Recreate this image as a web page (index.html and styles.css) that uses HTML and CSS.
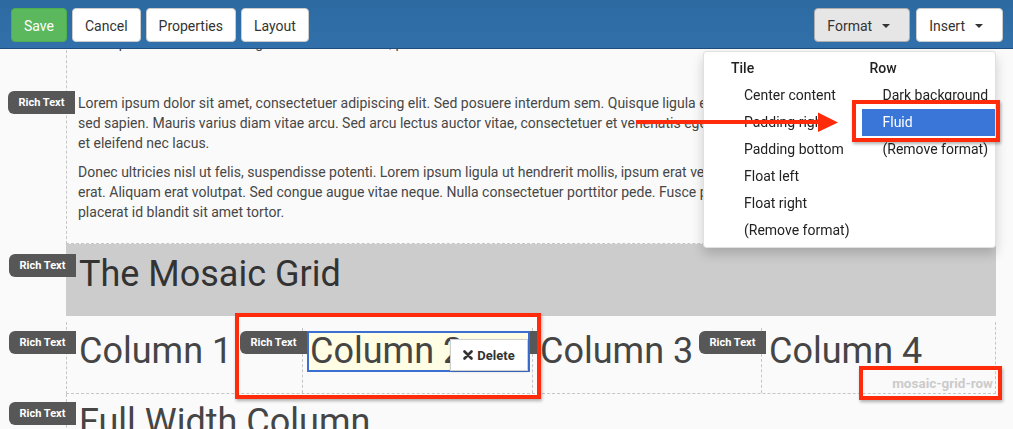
FILE: index.html
```html
<!DOCTYPE html>
<html lang="en">
<head>
<meta charset="utf-8">
<title>Mosaic Layout Editor</title>
<link rel="stylesheet" href="styles.css">
</head>
<body>
<header class="toolbar">
  <div class="tb-group">
    <button class="btn btn-save">Save</button>
    <button class="btn">Cancel</button>
    <button class="btn">Properties</button>
    <button class="btn">Layout</button>
  </div>
  <div class="tb-group">
    <button class="btn btn-active">Format<span class="caret"></span></button>
    <button class="btn">Insert<span class="caret"></span></button>
  </div>
</header>

<div class="dropdown">
  <div class="dd-col dd-col-tile">
    <div class="dd-head">Tile</div>
    <div class="dd-item">Center content</div>
    <div class="dd-item">Padding right</div>
    <div class="dd-item">Padding bottom</div>
    <div class="dd-item">Float left</div>
    <div class="dd-item">Float right</div>
    <div class="dd-item">(Remove format)</div>
  </div>
  <div class="dd-col dd-col-row">
    <div class="dd-head">Row</div>
    <div class="dd-item">Dark background</div>
    <div class="dd-item active">Fluid</div>
    <div class="dd-item">(Remove format)</div>
  </div>
</div>

<main class="canvas">
  <section class="row row-text">
    <div class="tile tile-partial">
      <p>Fusce purus morbi tortor magna condimentum vel, placerat id blandit sit amet tortor. Mauris sed libero.</p>
    </div>
    <div class="tile tile-body">
      <span class="label">Rich Text</span>
      <p>Lorem ipsum dolor sit amet, consectetuer adipiscing elit. Sed posuere interdum sem. Quisque ligula eros ullamcorper quis, lacinia quis facilisis<br>sed sapien. Mauris varius diam vitae arcu. Sed arcu lectus auctor vitae, consectetuer et venenatis eget velit. Sed augue orci, lacinia eu tincidunt<br>et eleifend nec lacus.</p>
      <p>Donec ultricies nisl ut felis, suspendisse potenti. Lorem ipsum ligula ut hendrerit mollis, ipsum erat vehicula risus, eu suscipit sem libero nec<br>erat. Aliquam erat volutpat. Sed congue augue vitae neque. Nulla consectetuer porttitor pede. Fusce purus morbi tortor magna condimentum vel,<br>placerat id blandit sit amet tortor.</p>
    </div>
  </section>

  <section class="row row-dark">
    <div class="tile">
      <span class="label">Rich Text</span>
      <h1 class="big">The Mosaic Grid</h1>
    </div>
  </section>

  <section class="row row-grid">
    <div class="cell">
      <div class="tile">
        <span class="label">Rich Text</span>
        <h2 class="big">Column 1</h2>
      </div>
    </div>
    <div class="cell">
      <div class="tile tile-selected">
        <span class="label">Rich Text</span>
        <h2 class="big">Column 2</h2>
        <button class="delete"><svg class="x-icon" viewBox="0 0 10 10" width="10" height="10"><path d="M1.5 1.5 L8.5 8.5 M8.5 1.5 L1.5 8.5" stroke="#333" stroke-width="2.6" stroke-linecap="round"/></svg>Delete</button>
      </div>
    </div>
    <div class="cell">
      <div class="tile">
        <span class="label">Rich Text</span>
        <h2 class="big">Column 3</h2>
      </div>
    </div>
    <div class="cell">
      <div class="tile">
        <span class="label">Rich Text</span>
        <h2 class="big">Column 4</h2>
      </div>
    </div>
    <span class="row-name">mosaic-grid-row</span>
  </section>

  <section class="row row-full">
    <div class="tile">
      <span class="label">Rich Text</span>
      <h2 class="big">Full Width Column</h2>
    </div>
  </section>
</main>

<div class="anno anno-fluid"></div>
<div class="anno anno-col"></div>
<div class="anno anno-rowname"></div>
<svg class="arrow" width="215" height="30" viewBox="0 0 215 30">
  <line x1="6" y1="14" x2="192" y2="14" stroke="#ff2b0a" stroke-width="4"/>
  <polygon points="188,4.5 208,14.5 188,24" fill="#ff2b0a"/>
</svg>
</body>
</html>
```

FILE: styles.css
```css
* { box-sizing: border-box; }
html, body { margin: 0; height: 100%; }
body {
  background: #fafafa;
  font-family: Roboto, "Liberation Sans", sans-serif;
  font-size: 14px;
  color: #474747;
  overflow: hidden;
  position: relative;
}

/* Toolbar */
.toolbar {
  position: fixed;
  top: 0; left: 0; right: 0;
  height: 49px;
  background: linear-gradient(#2d6aa2, #3170aa);
  border-bottom: 1px solid #1f4e7c;
  display: flex;
  justify-content: space-between;
  align-items: flex-start;
  padding: 8px 10px 0 11px;
  z-index: 10;
}
.tb-group { display: flex; gap: 5px; }
.tb-group + .tb-group { gap: 6px; }
.btn {
  font-family: inherit;
  font-size: 14px;
  line-height: 20px;
  height: 34px;
  padding: 7px 12px 5px;
  border: 1px solid #ccc;
  border-radius: 4px;
  background: #fff;
  color: #333;
  display: inline-flex;
  align-items: center;
}
.btn-save { background: #5cb85c; border-color: #4cae4c; color: #fff; }
.btn-active { background: #e6e6e6; border-color: #adadad; }
.caret {
  display: inline-block;
  width: 0; height: 0;
  border-top: 4px solid #333;
  border-left: 4px solid transparent;
  border-right: 4px solid transparent;
  margin-left: 10px;
  margin-right: 7px;
}

/* Format dropdown */
.dropdown {
  position: absolute;
  top: 51px; left: 703px;
  width: 293px; height: 197px;
  background: #fff;
  border: 1px solid rgba(0,0,0,.12);
  border-radius: 4px;
  box-shadow: 0 6px 12px rgba(0,0,0,.18);
  display: flex;
  padding: 3px 0 0 20px;
  font-size: 14px;
  z-index: 20;
}
.dd-col-tile { width: 139px; }
.dd-col-row { width: 133px; }
.dd-head { height: 27px; line-height: 27px; padding-left: 7px; font-weight: 500; color: #222; }
.dd-item { height: 27px; line-height: 27px; padding-left: 20px; color: #222; white-space: nowrap; }
.dd-item.active { background: #3a76d7; color: #fff; }

/* Canvas rows */
.row {
  margin-left: 66px;
  width: 930px;
  border-left: 1px dashed #c6c6c6;
  position: relative;
}
.row-text {
  padding: 31px 0 19px 8px;
  border-bottom: 1px dashed #c6c6c6;
}
.row-dark {
  border-left: none;
  background: #cccccc;
  padding: 10px 0 21px 10px;
}
.row-grid {
  margin-top: 6px;
  padding-top: 6px;
  border-right: 1px dashed #c6c6c6;
  border-bottom: 1px dashed #c6c6c6;
  display: grid;
  grid-template-columns: 235px 230px 229px 1fr;
}
.cell { padding: 3px 2px 21px 4px; }
.cell:first-child { padding-left: 9px; }
.cell + .cell { border-left: 1px dashed #c6c6c6; }
.row-full { padding: 8px 0 0 9px; }

/* Tiles */
.tile {
  position: relative;
  border: 2px solid transparent;
  padding: 0 1px;
}
.tile-body { margin-top: 36px; }
.tile p { margin: 0 0 9px; line-height: 20px; white-space: nowrap; }
.tile p:last-child { margin-bottom: 0; }
.label {
  position: absolute;
  top: -2px;
  right: calc(100% + 2px);
  width: 67px;
  height: 23px;
  background: #575757;
  color: #fff;
  font-size: 11px;
  font-weight: 700;
  line-height: 23px;
  text-align: center;
  border-radius: 6px 0 0 6px;
  white-space: nowrap;
}
.big {
  margin: 0;
  font-size: 36px;
  font-weight: 400;
  line-height: 37px;
  color: #454545;
  white-space: nowrap;
}
h1.big { color: #333; }
.tile-selected {
  border-color: #3c6fd2;
  background: #fffde3;
  z-index: 2;
}
.delete {
  position: absolute;
  top: 6px; right: 0;
  width: 78px; height: 32px;
  background: #fff;
  border: 1px solid #cfcfcf;
  box-shadow: 0 1px 2px rgba(0,0,0,.15);
  font-family: inherit;
  font-size: 13px;
  font-weight: 700;
  color: #333;
  display: flex;
  align-items: center;
  justify-content: center;
  gap: 4px;
  padding: 0;
}
.row-name {
  position: absolute;
  right: 2px;
  bottom: 2px;
  font-size: 13.5px;
  font-weight: 700;
  line-height: 16px;
  color: #cbcbcb;
}

/* Annotations */
.anno {
  position: absolute;
  border: 4px solid #ff2b0a;
  box-shadow: 1px 2px 3px rgba(0,0,0,.3);
  z-index: 30;
}
.anno-fluid { left: 852px; top: 100px; width: 148px; height: 42px; }
.anno-col { left: 235px; top: 313px; width: 306px; height: 86px; }
.anno-rowname { left: 859px; top: 366px; width: 143px; height: 34px; }
.arrow { position: absolute; left: 630px; top: 108px; z-index: 30; }
```
